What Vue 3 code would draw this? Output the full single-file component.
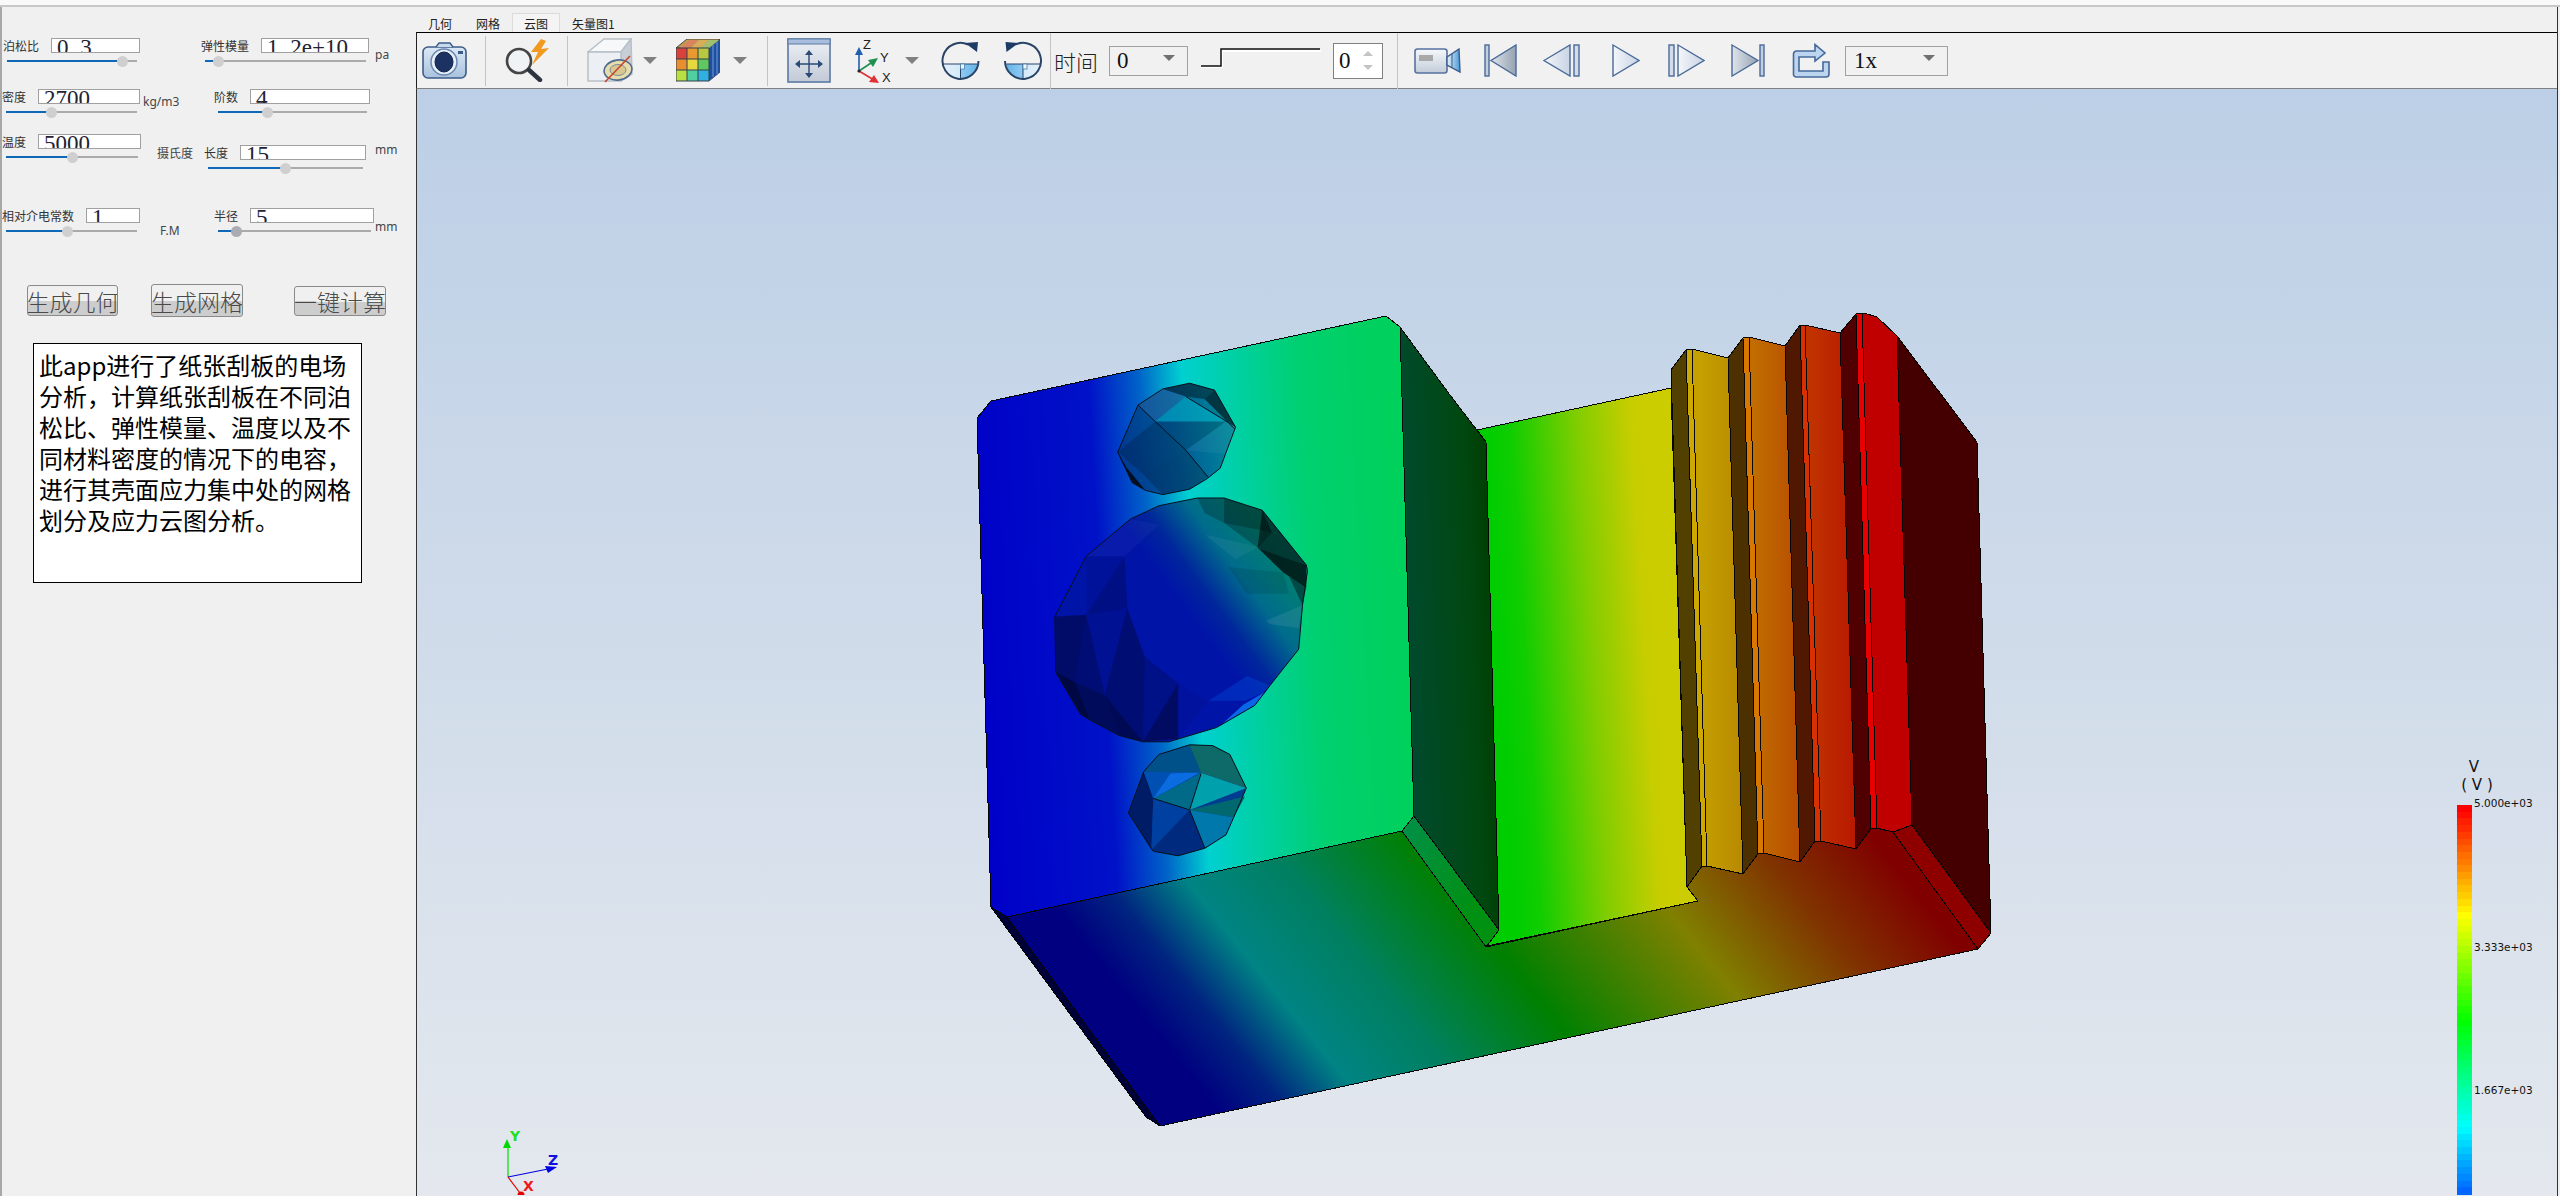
<script setup>
const fields = [
  { id: 'f1', label: '泊松比', a: '0', b: '3', pos: 89.2 },
  { id: 'f2', label: '弹性模量', a: '1', b: '2e+10', pos: 8.1, unit: 'pa' },
  { id: 'f3', label: '密度', a: '2700', pos: 34.4, unit: 'kg/m3' },
  { id: 'f4', label: '阶数', a: '4', pos: 32.9 },
  { id: 'f5', label: '温度', a: '5000', pos: 50, unit: '摄氏度' },
  { id: 'f6', label: '长度', a: '15', pos: 50.3, unit: 'mm' },
  { id: 'f7', label: '相对介电常数', a: '1', pos: 47.3, unit: 'F.M' },
  { id: 'f8', label: '半径', a: '5', pos: 12.4, unit: 'mm' }
]
const note = [
  '此app进行了纸张刮板的电场',
  '分析，计算纸张刮板在不同泊',
  '松比、弹性模量、温度以及不',
  '同材料密度的情况下的电容，',
  '进行其壳面应力集中处的网格',
  '划分及应力云图分析。'
]
const tabs = ['几何', '网格', '云图', '矢量图1']

// zoom-crop coordinates of the hole facets, mapped to the page
const z = (s) =>
  s.split(' ').map((p) => {
    const [x, y] = p.split(',').map(Number)
    return (x / 2.613 + 960).toFixed(1) + ',' + (y / 2.613 + 300).toFixed(1)
  }).join(' ')

const faces = [
  { p: '977,419 991,402 1386,317 1400,328 1414,817 1402,832 1007,918 991,908', f: 'url(#gFront)' },
  { p: '1400,328 1450,396 1486,443 1499,931 1414,817', f: 'url(#gSide)' },
  { p: '1477,431 1671,389 1687,888 1698,902 1487,947 1499,931 1486,443', f: 'url(#gWall)' },
  { p: '1007,918 1402,832 1486,948 1698,902 1687,888 1702,867 1707,867 1743,875 1758,855 1764,854 1800,863 1815,842 1821,842 1856,850 1871,830 1876,829 1893,833 1978,950 1160,1127', f: 'url(#gBottom)' },
  { p: '991,908 1007,918 1160,1127 1146,1118', f: '#000038' },
  { p: '1402,832 1414,817 1499,931 1486,948', f: 'url(#gBevel)' },
  { p: '1893,833 1912,826 1991,934 1978,950', f: '#8e0000' },
  { p: '1897,337 1977,443 1991,934 1912,826', f: '#440000' },
  { p: '1671,371 1686,351 1702,867 1687,888', f: '#524000' },
  { p: '1686,351 1692,350 1707,867 1702,867', f: '#cda800' },
  { p: '1692,350 1728,359 1743,875 1707,867', f: 'url(#gL1)' },
  { p: '1728,359 1743,339 1758,855 1743,875', f: '#4d3000' },
  { p: '1743,339 1749,338 1764,854 1758,855', f: '#d87800' },
  { p: '1749,338 1785,347 1800,863 1764,854', f: 'url(#gL2)' },
  { p: '1785,347 1800,326 1815,842 1800,863', f: '#501800' },
  { p: '1800,326 1805,326 1821,842 1815,842', f: '#d83000' },
  { p: '1805,326 1840,334 1856,850 1821,842', f: 'url(#gL3)' },
  { p: '1840,334 1856,315 1871,830 1856,850', f: '#500000' },
  { p: '1856,315 1862,314 1877,829 1871,830', f: '#e80000' },
  { p: '1862,314 1864,314 1877,318 1897,337 1912,826 1893,833 1877,829', f: '#c00000' }
]

const bigOutline = z('445,575 520,540 620,520 690,520 790,552 905,695 908,710 895,800 885,915 810,1010 770,1062 670,1120 545,1157 478,1157 415,1140 340,1100 315,1085 250,975 248,830 330,672')
const upOutline = z('465,277 530,235 600,220 665,238 720,335 680,442 645,470 600,497 530,511 485,500 450,480 412,400')
const lowOutline = z('480,1235 520,1190 600,1165 660,1167 705,1190 748,1278 715,1355 695,1400 640,1435 570,1455 505,1443 440,1343')

const facets = [
  // large hole
  ['248,830 330,825 300,1000 250,975', '#000', .38],
  ['330,825 378,1035 300,1000', '#000', .3],
  ['250,975 300,1000 340,1100 315,1085', '#000', .6],
  ['300,1000 378,1035 415,1140 340,1100', '#000', .45],
  ['378,1035 478,1157 415,1140', '#000', .5],
  ['330,825 437,808 378,1035', '#000', .12],
  ['437,808 483,935 478,1157 378,1035', '#000', .32],
  ['483,935 570,1005 478,1157', '#000', .2],
  ['570,1005 570,1150 478,1157', '#000', .42],
  ['330,672 430,672 437,808 330,825', '#000', .08],
  ['330,825 430,672 437,808', '#000', .14],
  ['445,575 520,590 430,672 330,672', '#fff', .03],
  ['570,1005 650,1050 570,1150', '#000', .06],
  ['690,520 790,552 815,610 690,585', '#000', .42],
  ['790,552 905,695 778,650', '#000', .55],
  ['778,650 905,695 905,755 845,715', '#000', .72],
  ['815,610 778,650 690,585', '#000', .25],
  ['845,715 905,755 895,800 860,725', '#000', .4],
  ['620,520 690,520 690,585 640,560', '#000', .22],
  ['640,615 780,648 720,680', '#fff', .05],
  ['700,700 845,715 860,770 750,770', '#000', .1],
  ['800,840 895,800 885,860 810,850', '#fff', .08],
  ['750,985 810,1010 800,1025 745,1050 650,1050', '#0040d0', .5],
  ['680,1115 740,1060 800,1025 770,1062', '#0a66e8', 1],
  // upper small hole
  ['530,235 600,220 665,238 720,335 700,322 640,262 590,255', '#000', .42],
  ['665,238 720,335 700,322 640,262', '#000', .25],
  ['510,320 590,255 695,320', '#00c0d0', .5],
  ['465,277 530,235 590,255 510,320', '#fff', .08],
  ['510,320 695,320 590,395', '#000', .14],
  ['590,395 695,320 720,335 700,405', '#fff', .05],
  ['412,400 510,320 590,395 480,460', '#000', .18],
  ['480,460 590,395 648,465 600,497 530,511', '#000', .2],
  ['412,400 435,440 485,500 450,480', '#000', .75],
  // lower small hole
  ['480,1235 505,1305 500,1440 440,1343', '#001c66', 1],
  ['505,1305 600,1335 500,1440', '#0040a0', 1],
  ['600,1335 640,1435 570,1455 505,1443 500,1440', '#002a7e', 1],
  ['480,1235 630,1235 505,1305', '#0050b4', 1],
  ['505,1305 630,1236 550,1240', '#0a6ce0', 1],
  ['505,1305 630,1238 600,1335', '#006a88', 1],
  ['630,1238 748,1278 600,1335', '#00a0ac', 1],
  ['600,1335 745,1300 715,1355', '#00686e', 1],
  ['600,1335 715,1355 695,1400 640,1435', '#0078ac', 1],
  ['480,1235 520,1190 600,1165 630,1238', '#00508a', 1],
  ['600,1165 660,1167 705,1190 748,1278 630,1238', '#0e6a68', 1]
].map(([p, f, o]) => ({ p: z(p), f, o }))

const edges = [
  '465,277 510,320 590,395 648,465',
  '590,255 700,322 718,340',
  '505,1305 600,1335',
  '630,1240 600,1335 640,1435'
].map(z)

const bandH = 389 / 58
const bands = Array.from({ length: 58 }, (_, i) => {
  const y = 806 + i * bandH
  return { y, c: `hsl(${Math.max(0, ((y + bandH / 2 - 806) / 1.76 - 3)).toFixed(0)},100%,50%)` }
})
const ticks = [
  { y: 808, t: '5.000e+03' },
  { y: 952, t: '3.333e+03' },
  { y: 1095, t: '1.667e+03' }
]
</script>

<template>
  <div class="app">
    <div class="topbar"></div>
    <div class="main">
      <aside class="side">
        <div class="params">
          <div v-for="f in fields" :key="f.id" class="field" :class="f.id">
            <div class="col">
              <div class="head">
                <span class="label">{{ f.label }}</span>
                <div class="input"><span class="val">{{ f.a }}<template v-if="f.b"><span class="dot">.</span>{{ f.b }}</template></span></div>
              </div>
              <div class="track">
                <div class="fill" :style="{ width: f.pos + '%' }"></div>
                <div class="thumb" :style="{ left: f.pos + '%' }"></div>
              </div>
            </div>
            <span v-if="f.unit" class="unit">{{ f.unit }}</span>
          </div>
        </div>
        <div class="actions">
          <button class="btn b1">生成几何</button>
          <button class="btn b2">生成网格</button>
          <button class="btn b3">一键计算</button>
        </div>
        <div class="note">
          <div v-for="l in note" :key="l">{{ l }}</div>
        </div>
      </aside>

      <section class="work">
        <nav class="tabs">
          <span v-for="t in tabs" :key="t" class="tab" :class="{ active: t === '云图' }">{{ t }}</span>
        </nav>
        <div class="toolbar">
          <svg class="i-camera" width="45" height="37" viewBox="0 0 45 37">
            <defs><linearGradient id="gBlue" x1="0" y1="0" x2="0" y2="1"><stop offset="0" stop-color="#dce8f6"/><stop offset="1" stop-color="#a9c2de"/></linearGradient></defs>
            <rect x="1" y="5" width="43" height="31" rx="5" fill="url(#gBlue)" stroke="#3d5c86" stroke-width="1.6"/>
            <path d="M14 5 L17 1 H28 L31 5" fill="#c8d9ec" stroke="#3d5c86" stroke-width="1.4"/>
            <rect x="36" y="9" width="5" height="3" fill="#3d5c86"/>
            <circle cx="22" cy="20" r="13" fill="#e6eef8" stroke="#6a88b0" stroke-width="1.5"/>
            <ellipse cx="22" cy="20" rx="9" ry="10" fill="#1b3263" stroke="#0f2248"/>
          </svg>
          <i class="sep s1"></i>
          <svg class="i-search" width="45" height="43" viewBox="0 0 45 43">
            <polygon points="36,0 26,13 33,13 27,26 44,9 36,10 41,2" fill="#f29a1f"/>
            <circle cx="14" cy="22" r="12" fill="#f0f4f8" fill-opacity=".8" stroke="#444" stroke-width="2.6"/>
            <line x1="24" y1="31" x2="35" y2="41" stroke="#2c3440" stroke-width="4.4" stroke-linecap="round"/>
          </svg>
          <i class="sep s2"></i>
          <svg class="i-clip" width="46" height="45" viewBox="0 0 46 45">
            <polygon points="1,14 17,1 44,1 34,14" fill="#f6f8fa" stroke="#b8c0c8" stroke-width="1.5"/>
            <polygon points="34,14 44,1 45,36 34,43" fill="#c8ced6" stroke="#b8c0c8" stroke-width="1.5"/>
            <polygon points="1,14 34,14 34,43 1,43" fill="#eceff3" stroke="#b8c0c8" stroke-width="1.5"/>
            <ellipse cx="31" cy="32" rx="14" ry="10" fill="#e8dcae" stroke="#4d6c8e" stroke-width="1.6" transform="rotate(-8 31 32)"/>
            <ellipse cx="31" cy="32" rx="8" ry="5.5" fill="#d8c890" stroke="#7d8c98"/>
            <line x1="18" y1="44" x2="43" y2="18" stroke="#c8452c" stroke-width="1.6"/>
          </svg>
          <svg class="arrow a1" width="14" height="7" viewBox="0 0 14 7"><polygon points="0,0 14,0 7,7" fill="#808080"/></svg>
          <svg class="i-cube" width="44" height="43" viewBox="0 0 44 43">
            <polygon points="33,9 44,0 44,33 33,42" fill="#1f50a0" stroke="#33507a"/>
            <polygon points="0,9 11,0 44,0 33,9" fill="#c0a050" stroke="#444"/>
            <polygon points="4,9 13,1 23,1 15,9" fill="#d8845c"/>
            <polygon points="15,9 23,1 33,1 25,9" fill="#d6ae5a"/>
            <polygon points="25,9 33,1 43,1 33,9" fill="#a0bf70"/>
            <rect x="0" y="9" width="11" height="11" fill="#d8423a"/><rect x="11" y="9" width="11" height="11" fill="#e89a30"/><rect x="22" y="9" width="11" height="11" fill="#b8c840"/>
            <rect x="0" y="20" width="11" height="11" fill="#e89030"/><rect x="11" y="20" width="11" height="11" fill="#e8d840"/><rect x="22" y="20" width="11" height="11" fill="#60c860"/>
            <rect x="0" y="31" width="11" height="11" fill="#b8e040"/><rect x="11" y="31" width="11" height="11" fill="#50d0a0"/><rect x="22" y="31" width="11" height="11" fill="#30b0e0"/>
            <path d="M11 9V42M22 9V42M0 20H33M0 31H33M0 9H33V42H0Z" fill="none" stroke="#33404c" stroke-width="1"/>
            <path d="M37 6V38M41 3V35" stroke="#6f9ad8" stroke-width="1"/>
          </svg>
          <svg class="arrow a2" width="14" height="7" viewBox="0 0 14 7"><polygon points="0,0 14,0 7,7" fill="#808080"/></svg>
          <i class="sep s3"></i>
          <svg class="i-fit" width="44" height="45" viewBox="0 0 44 45">
            <defs><linearGradient id="gFit" x1="0" y1="0" x2="0" y2="1"><stop offset="0" stop-color="#eef1f6"/><stop offset="1" stop-color="#c2cad6"/></linearGradient></defs>
            <rect x="1" y="1" width="42" height="43" fill="url(#gFit)" stroke="#5a7aa4" stroke-width="1.6"/>
            <rect x="1" y="1" width="42" height="5" fill="#a8bedc" stroke="#5a7aa4"/>
            <path d="M22 15V37M11 26H33" stroke="#2a4a78" stroke-width="1.4"/>
            <path d="M22 12l-4 5h8zM22 40l-4-5h8zM8 26l5-4v8zM36 26l-5-4v8z" fill="#2a4a78"/>
          </svg>
          <svg class="i-axis" width="40" height="45" viewBox="0 0 40 45">
            <line x1="5" y1="33" x2="5" y2="12" stroke="#1f5fb0" stroke-width="1.6"/><polygon points="5,9 1,17 9,17" fill="#1f5fb0"/>
            <line x1="5" y1="33" x2="20" y2="23" stroke="#1f9050" stroke-width="1.6"/><polygon points="24,20 14,22 19,29" fill="#1f9050"/>
            <line x1="5" y1="33" x2="20" y2="42" stroke="#e03030" stroke-width="1.6"/><polygon points="25,45 15,44 20,37" fill="#e03030"/>
            <circle cx="5" cy="33" r="1.6" fill="#222"/>
            <text x="9" y="11" class="axt">Z</text><text x="26" y="24" class="axt">Y</text><text x="28" y="44" class="axt">X</text>
          </svg>
          <svg class="arrow a3" width="14" height="7" viewBox="0 0 14 7"><polygon points="0,0 14,0 7,7" fill="#808080"/></svg>
          <svg class="i-cw" width="39" height="41" viewBox="0 0 39 41">
            <defs><linearGradient id="gRot" x1="0" y1="0" x2="1" y2="0"><stop offset="0" stop-color="#e4f1fb"/><stop offset=".5" stop-color="#d3e9f8"/><stop offset=".52" stop-color="#8ecaf2"/><stop offset="1" stop-color="#63b3e8"/></linearGradient></defs>
            <path d="M1.500 24H37A18 18 0 0 1 1.500 24Z" fill="url(#gRot)"/>
            <path d="M1.500 24H36M19.500 24V39" stroke="#2a4468" stroke-width="1"/>
            <rect x="19.500" y="24" width="4" height="5" fill="#eef6fc" stroke="#4a80ac" stroke-width=".8"/>
            <path d="M27 4.500A18 18 0 1 0 37.500 21" fill="none" stroke="#2a4468" stroke-width="2"/>
            <polygon points="24,3 36,12 37,2" fill="#1c3c66"/>
          </svg>
          <svg class="i-ccw" width="40" height="41" viewBox="0 0 39 41">
            <g transform="translate(39 0) scale(-1 1)">
              <path d="M1.500 24H37A18 18 0 0 1 1.500 24Z" fill="url(#gRot)"/>
              <path d="M1.500 24H36M19.500 24V39" stroke="#2a4468" stroke-width="1"/>
              <rect x="15.500" y="24" width="4" height="5" fill="#eef6fc" stroke="#4a80ac" stroke-width=".8"/>
              <path d="M27 4.500A18 18 0 1 0 37.500 21" fill="none" stroke="#2a4468" stroke-width="2"/>
              <polygon points="24,3 36,12 37,2" fill="#1c3c66"/>
            </g>
          </svg>
          <i class="sep s4"></i>
          <span class="time">时间</span>
          <div class="combo c-time"><span>0</span><svg width="12" height="6" viewBox="0 0 12 6"><polygon points="0,0 12,0 6,6" fill="#707070"/></svg></div>
          <svg class="i-step" width="120" height="22" viewBox="0 0 120 22">
            <polyline points="0,19 21,19 21,3 120,3" fill="none" stroke="#fff" stroke-width="2"/>
            <polyline points="0,18 20,18 20,1 119,1" fill="none" stroke="#111" stroke-width="1.5"/>
          </svg>
          <div class="spin"><span>0</span><div class="spin-arrows">
            <svg width="10" height="5" viewBox="0 0 10 5"><polygon points="5,0 10,5 0,5" fill="#c4c4c4"/></svg>
            <svg width="10" height="5" viewBox="0 0 10 5"><polygon points="0,0 10,0 5,5" fill="#c4c4c4"/></svg>
          </div></div>
          <i class="sep s5"></i>
          <svg class="i-video" width="47" height="27" viewBox="0 0 47 27">
            <defs>
              <linearGradient id="gCam" x1="0" y1="0" x2="0" y2="1"><stop offset="0" stop-color="#f6f8fb"/><stop offset="1" stop-color="#c2ccd8"/></linearGradient>
              <linearGradient id="gLens" x1="0" y1="0" x2="1" y2="0"><stop offset="0" stop-color="#e8f2fa"/><stop offset="1" stop-color="#4a9ad8"/></linearGradient>
            </defs>
            <rect x="1" y="2" width="32" height="24" rx="2.5" fill="url(#gCam)" stroke="#5672a0" stroke-width="1.6"/>
            <rect x="5" y="8" width="14" height="6" fill="#a8a8a8"/>
            <polygon points="33,10 45,2 46,25 33,18" fill="url(#gLens)" stroke="#3a5a88" stroke-width="1.4"/>
            <line x1="38" y1="7" x2="38" y2="21" stroke="#3a5a88"/>
          </svg>
          <svg class="i-first" width="33" height="33" viewBox="0 0 33 33">
            <rect x="1" y="1" width="4" height="31" fill="#c4cfe0" stroke="#4a6a98" stroke-width="1.4"/>
            <polygon points="32,1 32,32 7,16.5" fill="url(#gDk)" stroke="#4a6a98" stroke-width="1.4"/>
            <defs><linearGradient id="gDk" x1="0" y1="0" x2="1" y2="0"><stop offset="0" stop-color="#dfe4ea"/><stop offset="1" stop-color="#94a2b2"/></linearGradient>
            <linearGradient id="gLt" x1="0" y1="0" x2="1" y2="0"><stop offset="0" stop-color="#f4f6fa"/><stop offset="1" stop-color="#c8d3e4"/></linearGradient></defs>
          </svg>
          <svg class="i-prev" width="37" height="33" viewBox="0 0 37 33">
            <polygon points="1,16.5 27,1 27,32" fill="url(#gLt)" stroke="#4a6a98" stroke-width="1.4"/>
            <rect x="31" y="1" width="5" height="31" fill="#d4dcea" stroke="#4a6a98" stroke-width="1.4"/>
          </svg>
          <svg class="i-play" width="28" height="33" viewBox="0 0 28 33">
            <polygon points="1,1 27,16.5 1,32" fill="url(#gLt)" stroke="#4a6a98" stroke-width="1.4"/>
          </svg>
          <svg class="i-next" width="37" height="33" viewBox="0 0 37 33">
            <rect x="1" y="1" width="5" height="31" fill="#d4dcea" stroke="#4a6a98" stroke-width="1.4"/>
            <polygon points="10,1 36,16.5 10,32" fill="url(#gLt)" stroke="#4a6a98" stroke-width="1.4"/>
          </svg>
          <svg class="i-last" width="34" height="33" viewBox="0 0 34 33">
            <polygon points="1,1 27,16.5 1,32" fill="url(#gDk)" stroke="#4a6a98" stroke-width="1.4"/>
            <rect x="29" y="1" width="4" height="31" fill="#c4cfe0" stroke="#4a6a98" stroke-width="1.4"/>
          </svg>
          <svg class="i-loop" width="38" height="35" viewBox="0 0 38 35">
            <path d="M1.500 32V11a3 3 0 0 1 3-3H23V1.500L33 10 23 18V14H7V28H31V19H37V31a3 3 0 0 1-3 3H4a3 3 0 0 1-2.500-2Z" fill="#bcd4ee" stroke="#44699a" stroke-width="1.6"/>
          </svg>
          <div class="combo c-speed"><span>1x</span><svg width="12" height="6" viewBox="0 0 12 6"><polygon points="0,0 12,0 6,6" fill="#707070"/></svg></div>
        </div>

        <div class="viewport">
          <svg class="scene" width="2140" height="1106" viewBox="417 90 2140 1106">
            <defs>
              <linearGradient id="gFront" gradientUnits="userSpaceOnUse" x1="977" y1="660" x2="1400" y2="636">
                <stop offset="0" stop-color="#0000c8"/><stop offset=".3" stop-color="#0012c8"/><stop offset=".42" stop-color="#0064c8"/>
                <stop offset=".52" stop-color="#00d0d0"/><stop offset=".62" stop-color="#00d0ac"/><stop offset=".8" stop-color="#00d070"/><stop offset="1" stop-color="#00d05c"/>
              </linearGradient>
              <linearGradient id="gSide" gradientUnits="userSpaceOnUse" x1="1400" y1="600" x2="1499" y2="596">
                <stop offset="0" stop-color="#004a30"/><stop offset=".7" stop-color="#004810"/><stop offset="1" stop-color="#003c00"/>
              </linearGradient>
              <linearGradient id="gWall" gradientUnits="userSpaceOnUse" x1="1500" y1="660" x2="1665" y2="650">
                <stop offset="0" stop-color="#00cd00"/><stop offset=".15" stop-color="#10cd00"/><stop offset=".55" stop-color="#80cd00"/><stop offset=".88" stop-color="#c8cd00"/><stop offset="1" stop-color="#cccd00"/>
              </linearGradient>
              <linearGradient id="gBottom" gradientUnits="userSpaceOnUse" x1="1139" y1="1013" x2="1671" y2="587">
                <stop offset="0" stop-color="#000080"/><stop offset=".08" stop-color="#002480"/><stop offset=".175" stop-color="#008484"/><stop offset=".3" stop-color="#008060"/><stop offset=".47" stop-color="#008000"/>
                <stop offset=".7" stop-color="#808000"/><stop offset=".86" stop-color="#803400"/><stop offset="1" stop-color="#800000"/>
              </linearGradient>
              <linearGradient id="gBevel" gradientUnits="userSpaceOnUse" x1="1402" y1="830" x2="1490" y2="860">
                <stop offset="0" stop-color="#009048"/><stop offset="1" stop-color="#009012"/>
              </linearGradient>
              <linearGradient id="gL1" gradientUnits="userSpaceOnUse" x1="1700" y1="600" x2="1745" y2="600"><stop offset="0" stop-color="#c4a000"/><stop offset="1" stop-color="#b88800"/></linearGradient>
              <linearGradient id="gL2" gradientUnits="userSpaceOnUse" x1="1755" y1="600" x2="1800" y2="600"><stop offset="0" stop-color="#c06c00"/><stop offset="1" stop-color="#b84c00"/></linearGradient>
              <linearGradient id="gL3" gradientUnits="userSpaceOnUse" x1="1812" y1="600" x2="1856" y2="600"><stop offset="0" stop-color="#c03200"/><stop offset="1" stop-color="#b81800"/></linearGradient>
              <linearGradient id="gBig" gradientUnits="userSpaceOnUse" x1="1189.6" y1="617.6" x2="1277.6" y2="552.6">
                <stop offset="0" stop-color="#0014a8"/><stop offset=".25" stop-color="#00269c"/><stop offset=".6" stop-color="#006c8c"/><stop offset="1" stop-color="#008070"/>
              </linearGradient>
              <linearGradient id="gUp" gradientUnits="userSpaceOnUse" x1="1118" y1="420" x2="1236" y2="400">
                <stop offset="0" stop-color="#003a90"/><stop offset=".45" stop-color="#005a98"/><stop offset="1" stop-color="#009098"/>
              </linearGradient>
            </defs>

            <polygon v-for="(s, i) in faces" :key="i" :points="s.p" :fill="s.f" class="edge"/>

            <polygon :points="bigOutline" fill="url(#gBig)"/>
            <polygon :points="upOutline" fill="url(#gUp)"/>
            <polygon :points="lowOutline" fill="#003c90"/>
            <polygon v-for="(s, i) in facets" :key="'f' + i" :points="s.p" :fill="s.f" :fill-opacity="s.o"/>
            <polygon :points="bigOutline" class="outline"/>
            <polygon :points="upOutline" class="outline"/>
            <polygon :points="lowOutline" class="outline"/>
            <polyline v-for="(s, i) in edges" :key="'e' + i" :points="s" class="outline"/>

            <g class="triad">
              <line x1="508" y1="1178" x2="508" y2="1146" stroke="#00e000" stroke-width="1.2"/>
              <polygon points="507,1140 503,1149 511,1149 " fill="#00d800"/>
              <line x1="508" y1="1178" x2="548" y2="1170" stroke="#0000e0" stroke-width="1.2"/>
              <polygon points="557,1168 545,1167 548,1174" fill="#0000e0"/>
              <line x1="508" y1="1178" x2="520" y2="1194" stroke="#e00000" stroke-width="1.2"/>
              <circle cx="521" cy="1196" r="3.500" fill="#e00000"/>
              <text x="510" y="1142" fill="#20e020">Y</text>
              <text x="548" y="1166" fill="#1010e0">Z</text>
              <text x="523" y="1192" fill="#f01818">X</text>
            </g>

            <rect v-for="b in bands" :key="b.y" x="2457" :y="b.y" width="15" :height="bandH + .5" :fill="b.c" shape-rendering="crispEdges"/>
            <text x="2474" y="773" class="lg-title" text-anchor="middle">V</text>
            <text x="2477" y="791" class="lg-title" text-anchor="middle">( V )</text>
            <text v-for="t in ticks" :key="t.t" x="2474" :y="t.y" class="lg-tick">{{ t.t }}</text>
          </svg>
        </div>
      </section>
    </div>
  </div>
</template>

<style>
html, body { margin: 0; overflow: hidden; background: #f0f0f0; }
</style>

<style scoped>
.app {
  width: 2560px; height: 1196px; display: flex; flex-direction: column; overflow: hidden;
  background: #f0f0f0; color: #222;
  font-family: "Noto Sans CJK SC", "Noto Sans", sans-serif;
}
.topbar { height: 5px; background: #fafafa; border-bottom: 2px solid #c8c8c8; flex: none; }
.main { flex: 1; min-height: 0; display: flex; }

.side { width: 416px; flex: none; box-sizing: border-box; border-left: 2px solid #a8a8a8; }
.params {
  display: grid; grid-template-columns: 196px 1fr; grid-template-rows: 51px 45px 74px 77px;
  padding-top: 31px;
}
.field { display: flex; align-items: flex-start; }
.col { display: flex; flex-direction: column; flex: none; }
.head { display: flex; align-items: center; height: 15px; gap: 12px; }
.label { font-size: 12px; line-height: 15px; white-space: nowrap; color: #333; }
.input {
  flex: 1; height: 15px; box-sizing: border-box; background: #fff; border: 1px solid #a0a0a0;
  overflow: hidden; padding-left: 5px;
}
.val {
  display: block; margin-top: -3px; font: 23px/24px "Liberation Serif", serif; color: #223; white-space: nowrap;
}
.dot { padding: 0 3px; }
.track { position: relative; height: 2px; margin: 7px 3px 0 4px; background: #aaa; }
.fill { height: 100%; background: #0f67b8; }
.thumb {
  position: absolute; top: -4.5px; width: 11px; height: 11px; margin-left: -5.5px; border-radius: 50%; background: #cfcfcf;
}
.unit { font-size: 12px; line-height: 14px; white-space: nowrap; color: #444; font-family: "Noto Sans", "Noto Sans CJK SC", sans-serif; }

.f1 .col { margin-left: 1px; width: 137px; }
.f2 .col { margin-left: 3px; width: 168px; }
.f3 .col { width: 138px; }
.f4 .col { margin-left: 16px; width: 156px; }
.f5 .col { width: 139px; }
.f6 { margin-top: 11px; }
.f6 .col { margin-left: 6px; width: 162px; }
.f7 .col { width: 138px; }
.f8 .col { margin-left: 16px; width: 160px; }
.f2 .unit { margin: 10px 0 0 6px; }
.f3 .unit { margin: 6px 0 0 3px; }
.f5 .unit { margin: 12px 0 0 16px; font-family: "Noto Sans CJK SC", sans-serif; }
.f6 .unit { margin: -2px 0 0 9px; }
.f7 .unit { margin: 16px 0 0 20px; }
.f8 .unit { margin: 12px 0 0 1px; }
.f8 .thumb { background: #a9adb3; }

.actions { display: flex; align-items: center; height: 31px; padding-left: 25px; }
.btn {
  box-sizing: border-box; padding: 0; display: flex; align-items: center; justify-content: center;
  border: 1px solid #8a8a8a; border-radius: 3px; white-space: nowrap; overflow: hidden;
  background: linear-gradient(#f0f0f0 0 52%, #cdcdcd 52% 100%);
  font: 300 23px/28px "Noto Sans CJK SC", sans-serif; color: #4a4a4a;
}
.b1 { width: 91px; height: 31px; }
.b2 { width: 92px; height: 33px; margin-left: 33px; }
.b3 { width: 92px; height: 30px; margin-left: 51px; }
.note {
  width: 329px; height: 240px; box-sizing: border-box; margin: 27px 0 0 31px; padding: 5px 0 0 5px;
  background: #fff; border: 1px solid #000; font-size: 24px; line-height: 31px; color: #000; white-space: nowrap;
}

.work { flex: 1; min-width: 0; display: flex; flex-direction: column; margin-right: 2px; border-right: 1px solid #333; }
.tabs { height: 25px; flex: none; display: flex; align-items: flex-end; }
.tab { height: 19px; box-sizing: border-box; padding: 0 11px; font-size: 12px; line-height: 19px; color: #222; white-space: nowrap; border: 1px solid transparent; border-bottom: 0; }
.tab.active { background: #f4f4f4; border-color: #dcdcdc; }
.toolbar {
  height: 57px; flex: none; box-sizing: border-box; display: flex; align-items: center;
  border-top: 1px solid #000; border-left: 1px solid #222; border-bottom: 1px solid #808080; background: #f1f1f1;
}
.toolbar > svg { flex: none; display: block; }
.sep { width: 1px; height: 50px; background: #c4c4c4; flex: none; }
.i-camera { margin-left: 5px; }
.s1 { margin-left: 18px; }
.i-search { margin-left: 19px; }
.s2 { margin-left: 17px; }
.i-clip { margin-left: 19px; }
.a1 { margin-left: 10px; }
.i-cube { margin-left: 19px; }
.a2 { margin-left: 13px; }
.s3 { margin-left: 20px; }
.i-fit { margin-left: 19px; }
.i-axis { margin-left: 23px; }
.a3 { margin-left: 11px; }
.i-cw { margin-left: 22px; }
.i-ccw { margin-left: 23px; }
.s4 { margin-left: 7px; height: 56px; }
.time { margin-left: 3px; width: 44px; font-size: 22px; font-weight: 300; line-height: 28px; color: #222; white-space: nowrap; }
.combo {
  height: 30px; box-sizing: border-box; border: 1px solid #a0a0a0; display: flex; align-items: center; justify-content: space-between;
  font: 23px/28px "Liberation Serif", serif; color: #111; flex: none; padding: 0 12px 0 7px;
}
.combo svg { margin-top: -6px; }
.c-time { margin-left: 11px; width: 79px; }
.c-speed { margin-left: 15px; width: 103px; padding-left: 8px; }
.i-step { margin-left: 13px; margin-top: -4px; }
.spin {
  margin-left: 12px; width: 50px; height: 36px; box-sizing: border-box; background: #fff; border: 1px solid #808080; flex: none;
  display: flex; align-items: center; justify-content: space-between; padding: 0 9px 0 5px; font: 23px/28px "Liberation Serif", serif; color: #111;
}
.spin-arrows { display: flex; flex-direction: column; gap: 9px; }
.spin-arrows svg { display: block; }
.s5 { margin-left: 14px; height: 56px; }
.i-video { margin-left: 16px; }
.i-first { margin-left: 23px; }
.i-prev { margin-left: 26px; }
.i-play { margin-left: 32px; }
.i-next { margin-left: 28px; }
.i-last { margin-left: 26px; }
.i-loop { margin-left: 27px; }
.axt { font: 13px "Liberation Sans", sans-serif; fill: #222; }

.viewport {
  flex: 1; min-height: 0; overflow: hidden; border-left: 1px solid #333;
  background: linear-gradient(#bccfe6, #e4e8ee);
}
.scene { display: block; }
.edge { stroke: #060606; stroke-width: 1; stroke-linejoin: round; shape-rendering: crispEdges; }
.outline { fill: none; stroke: #06101c; stroke-width: 1; }
.triad text { font: bold 14px "DejaVu Sans", sans-serif; }
.lg-title { font: 15px "DejaVu Sans", sans-serif; fill: #111; }
.lg-tick { font: 10.5px "DejaVu Sans", sans-serif; fill: #111; }
</style>
